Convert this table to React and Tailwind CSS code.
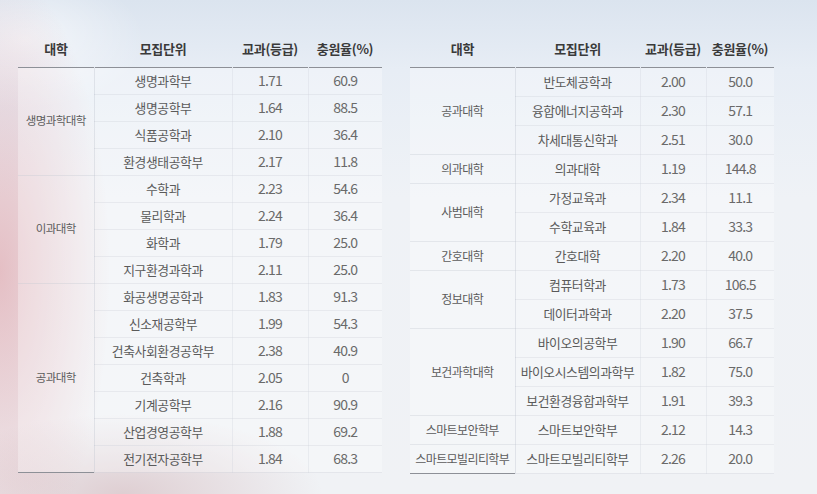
import React from "react";

const left = [
  { college: "생명과학대학", rows: [["생명과학부", "1.71", "60.9"], ["생명공학부", "1.64", "88.5"], ["식품공학과", "2.10", "36.4"], ["환경생태공학부", "2.17", "11.8"]] },
  { college: "이과대학", rows: [["수학과", "2.23", "54.6"], ["물리학과", "2.24", "36.4"], ["화학과", "1.79", "25.0"], ["지구환경과학과", "2.11", "25.0"]] },
  { college: "공과대학", rows: [["화공생명공학과", "1.83", "91.3"], ["신소재공학부", "1.99", "54.3"], ["건축사회환경공학부", "2.38", "40.9"], ["건축학과", "2.05", "0"], ["기계공학부", "2.16", "90.9"], ["산업경영공학부", "1.88", "69.2"], ["전기전자공학부", "1.84", "68.3"]] },
];

const right = [
  { college: "공과대학", rows: [["반도체공학과", "2.00", "50.0"], ["융합에너지공학과", "2.30", "57.1"], ["차세대통신학과", "2.51", "30.0"]] },
  { college: "의과대학", rows: [["의과대학", "1.19", "144.8"]] },
  { college: "사범대학", rows: [["가정교육과", "2.34", "11.1"], ["수학교육과", "1.84", "33.3"]] },
  { college: "간호대학", rows: [["간호대학", "2.20", "40.0"]] },
  { college: "정보대학", rows: [["컴퓨터학과", "1.73", "106.5"], ["데이터과학과", "2.20", "37.5"]] },
  { college: "보건과학대학", rows: [["바이오의공학부", "1.90", "66.7"], ["바이오시스템의과학부", "1.82", "75.0"], ["보건환경융합과학부", "1.91", "39.3"]] },
  { college: "스마트보안학부", rows: [["스마트보안학부", "2.12", "14.3"]] },
  { college: "스마트모빌리티학부", rows: [["스마트모빌리티학부", "2.26", "20.0"]] },
];

function DataTable({ groups, cols, rowH, collegeSize }) {
  return (
    <table className="table-fixed border-collapse">
      <colgroup>
        {cols.map((w, i) => (
          <col key={i} style={{ width: w }} />
        ))}
      </colgroup>
      <thead>
        <tr className="h-[37px] border-b-[1.5px] border-[#8d9097]">
          {["대학", "모집단위", "교과(등급)", "충원율(%)"].map((h) => (
            <th key={h} className="p-0 text-[13px] font-bold text-[#3a3a3a] tracking-[-0.3px] whitespace-nowrap align-middle">
              {h}
            </th>
          ))}
        </tr>
      </thead>
      <tbody className="bg-[rgba(255,255,255,0.3)] border-b-[1.5px] border-[#8d9097]">
        {groups.map((g, gi) =>
          g.rows.map((r, ri) => (
            <tr key={gi + "-" + ri} className={rowH}>
              {ri === 0 && (
                <td
                  rowSpan={g.rows.length}
                  className={`p-0 text-center align-middle text-[#5c5c5c] whitespace-nowrap tracking-[-0.6px] border-r border-[rgba(195,200,210,0.4)] ${collegeSize} ${gi < groups.length - 1 ? "border-b border-b-[rgba(195,200,210,0.35)]" : ""}`}
                >
                  {g.college}
                </td>
              )}
              <td className="p-0 text-center align-middle text-[12.8px] text-[#5a5a5a] whitespace-nowrap tracking-[-0.4px] border-r border-[rgba(205,210,218,0.3)] border-b border-b-[rgba(205,210,218,0.35)]">
                {r[0]}
              </td>
              <td className="p-0 text-center align-middle text-[14px] text-[#6a6a6a] tracking-[-0.8px] border-r border-[rgba(205,210,218,0.3)] border-b border-b-[rgba(205,210,218,0.35)]">
                {r[1]}
              </td>
              <td className="p-0 text-center align-middle text-[14px] text-[#6a6a6a] tracking-[-0.8px] border-b border-b-[rgba(205,210,218,0.35)]">
                {r[2]}
              </td>
            </tr>
          ))
        )}
      </tbody>
    </table>
  );
}

export default function App() {
  return (
    <div
      className="relative w-[817px] h-[494px] overflow-hidden bg-[radial-gradient(ellipse_110px_300px_at_0%_55%,rgba(214,120,128,0.42),transparent),radial-gradient(ellipse_200px_80px_at_15%_100%,rgba(190,140,145,0.35),transparent),radial-gradient(ellipse_120px_70px_at_3%_8%,rgba(255,255,255,0.6),transparent),linear-gradient(180deg,#dbe4ef_0%,#e7edf5_14%,#eff2f6_40%,#f0f2f5_100%)]"
      style={{ fontFamily: '"Noto Sans CJK KR", "Noto Sans", sans-serif' }}
    >
      <div className="flex items-start gap-[28px] pl-[18px] pt-[30px]">
        <DataTable groups={left} cols={[76, 138, 76, 74]} rowH="h-[27px]" collegeSize="text-[11.5px]" />
        <DataTable groups={right} cols={[105, 125, 66, 68]} rowH="h-[29px]" collegeSize="text-[12px]" />
      </div>
    </div>
  );
}
